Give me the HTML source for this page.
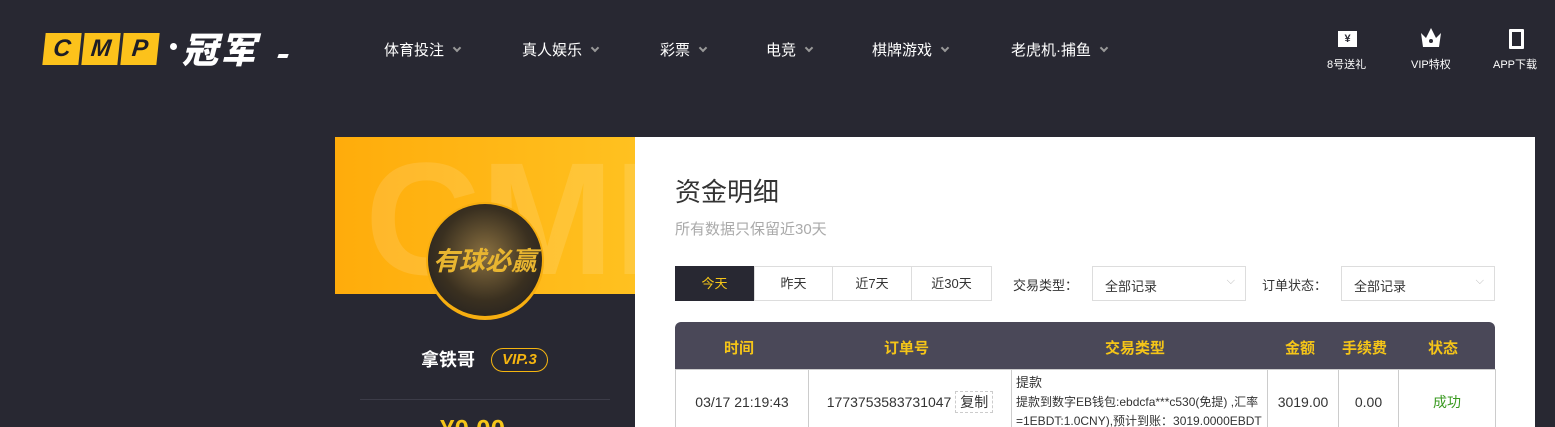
<!DOCTYPE html>
<html><head><meta charset="utf-8"><style>
*{margin:0;padding:0;box-sizing:border-box}
html,body{width:1555px;height:427px;overflow:hidden}
body{background:#282832;font-family:"Liberation Sans","Noto Sans CJK SC",sans-serif;position:relative}
.a{position:absolute}
.nav{color:#fff;font-size:15px;top:39px}
.nav i{display:inline-block;width:6px;height:6px;border-right:2px solid #999;border-bottom:2px solid #999;transform:rotate(45deg);margin-left:10px;position:relative;top:-4px}
.ic{color:#fff;font-size:11px;top:56px;text-align:center}
.cmp{top:33px;width:36px;height:32px;background:#fcc21b;color:#1d1d26;font:italic 900 24px "Liberation Sans",sans-serif;text-align:center;line-height:32px;transform:skewX(-6deg)}
table{border-collapse:collapse;font-size:14px;color:#333}
td{border:1px solid #ccc;text-align:center}
</style></head><body>
<div class="a cmp" style="left:44px">C</div>
<div class="a cmp" style="left:83px">M</div>
<div class="a cmp" style="left:122px">P</div>
<div class="a" style="left:170px;top:43px;width:7px;height:7px;background:#fff;border-radius:50%"></div>
<div class="a" style="left:182px;top:27px;color:#fff;font:italic 900 36px 'Noto Sans CJK SC',sans-serif;line-height:42px;letter-spacing:2px">冠军</div>
<div class="a" style="left:278px;top:54px;width:10px;height:4px;background:#fff;transform:skewX(-20deg)"></div>
<div class="a nav" style="left:384px">体育投注<i></i></div>
<div class="a nav" style="left:522px">真人娱乐<i></i></div>
<div class="a nav" style="left:660px">彩票<i></i></div>
<div class="a nav" style="left:766px">电竞<i></i></div>
<div class="a nav" style="left:872px">棋牌游戏<i></i></div>
<div class="a nav" style="left:1011px">老虎机·捕鱼<i></i></div>
<div class="a" style="left:1338px;top:31px;width:19px;height:16px;background:#fff;color:#282832;font-size:11px;font-weight:bold;text-align:center;line-height:16px">¥</div>
<div class="a ic" style="left:1327px">8号送礼</div>
<svg class="a" style="left:1419px;top:26px" width="24" height="22"><path d="M2 7 L7 12 L12 2 L17 12 L22 7 L20 21 H4 Z" fill="#fff"/><circle cx="12" cy="15" r="2" fill="#282832"/></svg>
<div class="a ic" style="left:1411px">VIP特权</div>
<div class="a" style="left:1509px;top:29px;width:15px;height:20px;border:3px solid #fff;border-radius:1px"></div>
<div class="a ic" style="left:1493px">APP下载</div>

<div class="a" style="left:335px;top:137px;width:300px;height:157px;background:linear-gradient(90deg,#ffac0b,#ffc120);overflow:hidden"><div style="position:absolute;left:30px;top:-10px;font:bold 160px 'Liberation Sans';color:rgba(255,255,255,.12)">CMP</div></div>
<div class="a" style="left:335px;top:294px;width:300px;height:133px;background:#282832"></div>
<div class="a" style="left:426px;top:202px;width:118px;height:118px;border-radius:50%;background:#f6ae10"></div>
<div class="a" style="left:428px;top:204px;width:114px;height:112px;border-radius:50%;background:radial-gradient(circle at 50% 45%,#8a7040,#3a3020 55%,#1a1a1e);color:#e8b530;font:bold 26px 'Noto Sans CJK SC';text-align:center;line-height:112px;font-style:italic">有球必赢</div>
<div class="a" style="left:421px;top:346px;color:#fff;font-size:18px;font-weight:bold">拿铁哥</div>
<div class="a" style="left:491px;top:348px;width:57px;height:24px;border:1px solid #f5b510;border-radius:12px;color:#f5b510;font:italic bold 15px 'Liberation Sans';text-align:center;line-height:22px">VIP.3</div>
<div class="a" style="left:360px;top:399px;width:250px;height:1px;background:#3c3c48"></div>
<div class="a" style="left:440px;top:414px;color:#f5c518;font-size:26px;font-weight:bold">¥0.00</div>

<div class="a" style="left:635px;top:137px;width:900px;height:290px;background:#fff"></div>
<div class="a" style="left:675px;top:172px;font-size:26px;color:#333">资金明细</div>
<div class="a" style="left:675px;top:218px;font-size:15px;color:#aaa">所有数据只保留近30天</div>
<div class="a" style="left:675px;top:266px;display:flex;font-size:13px">
<div style="width:79px;height:35px;background:#282832;color:#f5c518;text-align:center;line-height:35px">今天</div>
<div style="width:79px;height:35px;border:1px solid #ddd;text-align:center;line-height:33px;color:#333">昨天</div>
<div style="width:79px;height:35px;border:1px solid #ddd;border-left:0;text-align:center;line-height:33px;color:#333">近7天</div>
<div style="width:80px;height:35px;border:1px solid #ddd;border-left:0;text-align:center;line-height:33px;color:#333">近30天</div></div>
<div class="a" style="left:1013px;top:275px;font-size:13px;color:#333">交易类型：</div>
<div class="a" style="left:1092px;top:266px;width:154px;height:35px;border:1px solid #ddd;font-size:13px;color:#333;padding:9px 12px">全部记录<span style="position:absolute;right:10px;top:8px;color:#bbb;font-size:11px">⌵</span></div>
<div class="a" style="left:1262px;top:275px;font-size:13px;color:#333">订单状态：</div>
<div class="a" style="left:1341px;top:266px;width:154px;height:35px;border:1px solid #ddd;font-size:13px;color:#333;padding:9px 12px">全部记录<span style="position:absolute;right:10px;top:8px;color:#bbb;font-size:11px">⌵</span></div>
<div class="a" style="left:675px;top:322px;width:820px;height:48px;background:#4a4858;border-radius:6px 6px 0 0;color:#f5c518;font-size:15px;font-weight:bold">
<span class="a" style="left:49px;top:15px">时间</span><span class="a" style="left:209px;top:15px">订单号</span><span class="a" style="left:430px;top:15px">交易类型</span><span class="a" style="left:610px;top:15px">金额</span><span class="a" style="left:667px;top:15px">手续费</span><span class="a" style="left:753px;top:15px">状态</span></div>
<table class="a" style="left:675px;top:369px;width:821px">
<tr style="height:58px"><td style="width:133px">03/17 21:19:43</td><td style="width:203px">1773753583731047 <span style="border:1px dashed #ccc;padding:2px 4px">复制</span></td><td style="width:256px;text-align:left;padding:3px 4px;font-size:12px;line-height:19px;vertical-align:top"><span style="font-size:13px">提款</span><br>提款到数字EB钱包:ebdcfa***c530(免提) ,汇率=1EBDT:1.0CNY),预计到账：3019.0000EBDT</td><td style="width:71px">3019.00</td><td style="width:60px">0.00</td><td style="color:#3a9a20">成功</td></tr></table>
</body></html>
